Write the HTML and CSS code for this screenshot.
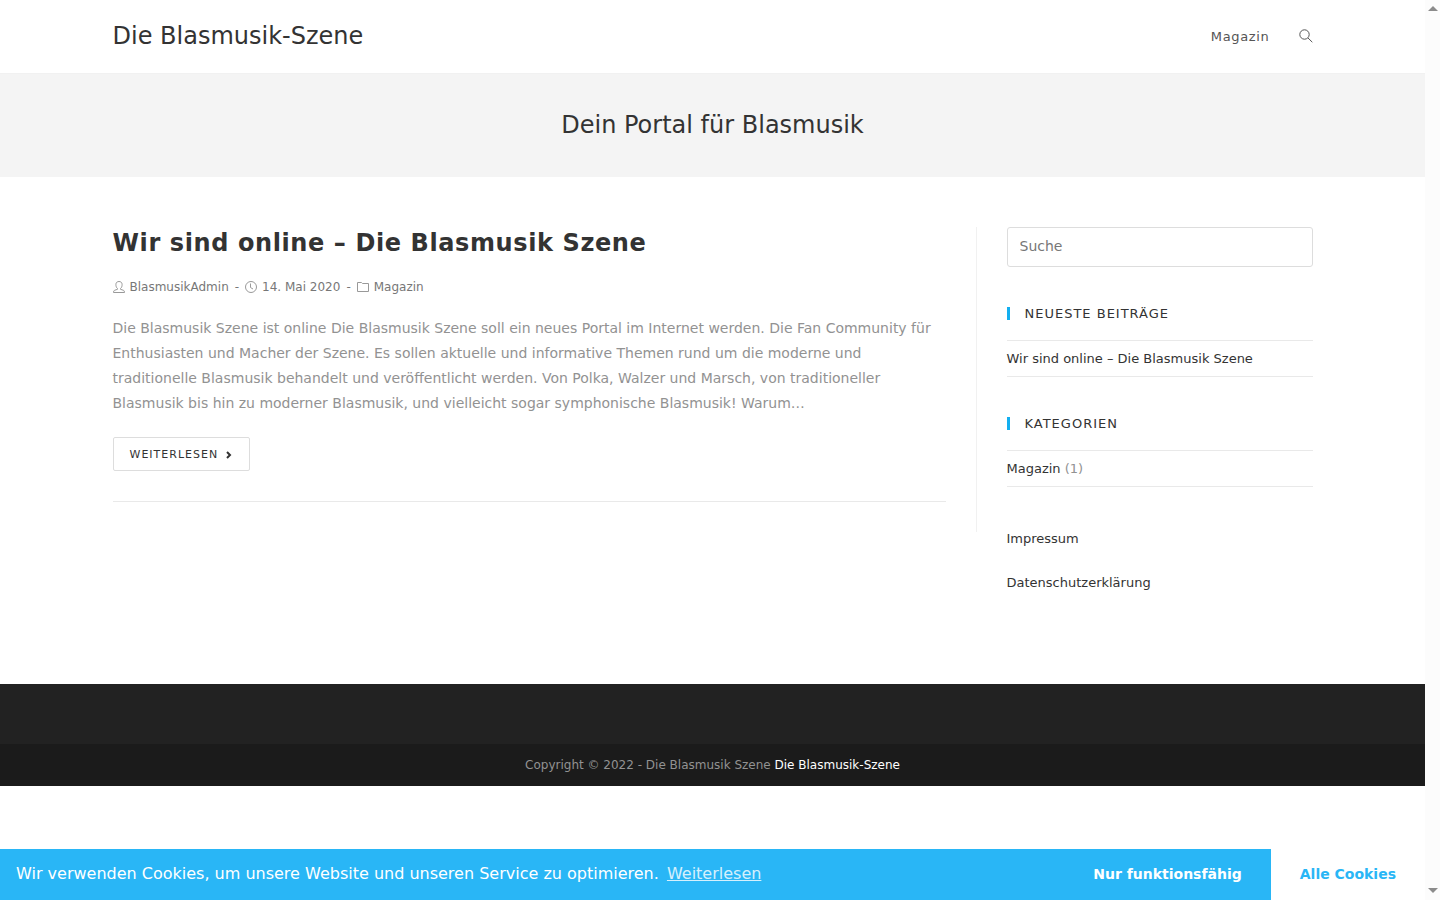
FILE: index.html
```html
<!DOCTYPE html>
<html lang="de">
<head>
    <meta charset="UTF-8">
    <meta name="viewport" content="width=device-width, initial-scale=1.0">
    <title>Die Blasmusik-Szene</title>
    <link rel="stylesheet" href="styles.css">
</head>
<body>

<header class="site-header">
    <div class="container header-inner">
        <a class="site-title" href="#">Die Blasmusik-Szene</a>
        <nav class="main-nav">
            <a href="#">Magazin</a>
            <a href="#" aria-label="Suche">
                <svg class="search-icon" viewBox="0 0 14 14"><circle cx="5.5" cy="5.5" r="4.7"/><path d="M9 9l4.3 4.2"/></svg>
            </a>
        </nav>
    </div>
</header>

<div class="page-header">
    <h1>Dein Portal für Blasmusik</h1>
</div>

<div class="container content">
    <main>
        <article class="entry">
            <h2><a href="#">Wir sind online – Die Blasmusik Szene</a></h2>
            <ul class="meta">
                <li>
                    <svg viewBox="0 0 12 12"><path d="M4.500 7.500C3.300 6.700 2.900 5 2.900 3.500 2.900 1.500 4.200.5 6 .5s3.100 1 3.100 3c0 1.500-.4 3.200-1.600 4v.8l3 1c.7.3 1 1 1 2.200H.5c0-1.200.3-1.900 1-2.200l3-1z"/></svg>
                    <a href="#">BlasmusikAdmin</a>
                </li>
                <li>
                    <svg viewBox="0 0 12 12"><circle cx="6" cy="6" r="5.5"/><path d="M5.500 2.500v4l2.500 1.500"/></svg>
                    14. Mai 2020
                </li>
                <li>
                    <svg viewBox="0 0 12 12"><path d="M.5 10.500v-9h4l1 1h6v8z"/></svg>
                    <a href="#">Magazin</a>
                </li>
            </ul>
            <p>Die Blasmusik Szene ist online Die Blasmusik Szene soll ein neues Portal im Internet werden. Die Fan Community für Enthusiasten und Macher der Szene. Es sollen aktuelle und informative Themen rund um die moderne und traditionelle Blasmusik behandelt und veröffentlicht werden. Von Polka, Walzer und Marsch, von traditioneller Blasmusik bis hin zu moderner Blasmusik, und vielleicht sogar symphonische Blasmusik! Warum…</p>
            <a class="readmore" href="#">Weiterlesen
                <svg viewBox="0 0 8 8"><path d="M2 1l3 3-3 3"/></svg>
            </a>
        </article>
    </main>

    <aside>
        <form class="widget">
            <input type="search" name="s" placeholder="Suche" aria-label="Suche">
        </form>
        <section class="widget">
            <h3>Neueste Beiträge</h3>
            <ul>
                <li><a href="#">Wir sind online – Die Blasmusik Szene</a></li>
            </ul>
        </section>
        <section class="widget">
            <h3>Kategorien</h3>
            <ul>
                <li><a href="#">Magazin</a> (1)</li>
            </ul>
        </section>
        <section class="widget legal">
            <p><a href="#">Impressum</a></p>
            <p><a href="#">Datenschutzerklärung</a></p>
        </section>
    </aside>
</div>

<footer>
    <div class="footer-widgets"></div>
    <div class="footer-bottom">Copyright © 2022 - Die Blasmusik Szene <a href="#">Die Blasmusik-Szene</a></div>
</footer>

<div class="cookie-bar">
    <span class="cookie-text">Wir verwenden Cookies, um unsere Website und unseren Service zu optimieren. <a href="#">Weiterlesen</a></span>
    <button type="button">Nur funktionsfähig</button>
    <button type="button" class="accept">Alle Cookies</button>
</div>

<div class="scrollbar" aria-hidden="true">
    <svg viewBox="0 0 10 5"><path d="M0 5l5-5 5 5z"/></svg>
    <svg viewBox="0 0 10 5"><path d="M0 0l5 5 5-5z"/></svg>
</div>

</body>
</html>
```
FILE: styles.css
```css
* {
    box-sizing: border-box;
}
body {
    margin: 0;
    padding-right: 15px;
    font-family: "DejaVu Sans", sans-serif;
    font-size: 14px;
    color: #929292;
    background-color: #fff;
}
a {
    color: #333;
    text-decoration: none;
}
h1, h2, h3, p, ul {
    margin: 0;
    padding: 0;
    font-weight: normal;
}
ul {
    list-style: none;
}
svg {
    fill: none;
    stroke: currentColor;
}
.container {
    width: 1200px;
    max-width: 90%;
    margin: 0 auto;
}

/* header */
.site-header {
    border-bottom: 1px solid #f1f1f1;
}
.header-inner {
    display: flex;
    justify-content: space-between;
    align-items: center;
    padding: 20px 0 21px;
}
.site-title {
    font-size: 24px;
    line-height: 32px;
}
.main-nav {
    display: flex;
    align-items: center;
    gap: 29px;
    font-size: 13px;
    letter-spacing: 0.05em;
}
.main-nav a {
    color: #555;
}
.search-icon {
    display: block;
    width: 14px;
    height: 14px;
}
.page-header {
    padding: 34px 0 35px;
    background-color: #f4f4f4;
    text-align: center;
}
.page-header h1 {
    font-size: 24px;
    line-height: 34px;
    color: #333;
}

/* content */
.content {
    display: flex;
    align-items: flex-start;
    padding: 50px 0 49px;
}
main {
    width: 72%;
    padding: 0 30px 30px 0;
    border-right: 1px solid #f1f1f1;
}
.entry {
    padding-bottom: 30px;
    border-bottom: 1px solid #e9e9e9;
}
.entry h2 {
    font-size: 24px;
    line-height: 32px;
    font-weight: bold;
    letter-spacing: 0.025em;
}
.meta {
    display: flex;
    margin: 19px 0 20px;
    font-size: 12px;
    line-height: 18px;
    color: #777;
}
.meta li {
    display: flex;
    align-items: center;
}
.meta li + li::before {
    content: "-";
    margin: 0 6px;
}
.meta a {
    color: #777;
}
.meta svg {
    width: 12px;
    height: 12px;
    margin-right: 5px;
    stroke: #999;
}
.entry p {
    line-height: 25px;
}
.readmore {
    display: inline-flex;
    align-items: center;
    margin-top: 21px;
    padding: 1px 16px 0;
    border: 1px solid #ddd;
    border-radius: 2px;
    font-size: 11px;
    line-height: 31px;
    letter-spacing: 1px;
    text-transform: uppercase;
}
.readmore svg {
    width: 8px;
    height: 8px;
    margin-left: 7px;
    stroke-width: 2;
}

/* sidebar */
aside {
    width: 28%;
    padding-left: 30px;
    font-size: 13px;
}
.widget {
    margin-bottom: 40px;
}
.widget input {
    display: block;
    width: 100%;
    height: 40px;
    padding: 0 12px 2px;
    border: 1px solid #ddd;
    border-radius: 3px;
    font-family: inherit;
    font-size: 14px;
    color: #333;
    appearance: none;
}
.widget input::placeholder {
    color: #777;
}
.widget h3 {
    margin-bottom: 20px;
    padding-left: 15px;
    border-left: 3px solid #13aff0;
    font-size: 13px;
    line-height: 13px;
    letter-spacing: 1px;
    text-transform: uppercase;
    color: #333;
}
.widget li {
    border-bottom: 1px solid #e9e9e9;
    line-height: 35px;
}
.widget ul {
    border-top: 1px solid #e9e9e9;
}
.legal p {
    line-height: 24px;
}
.legal p + p {
    margin-top: 20px;
}

/* footer */
.footer-widgets {
    height: 60px;
    background-color: #222;
}
.footer-bottom {
    padding: 12px 0;
    background-color: #1b1b1b;
    font-size: 12px;
    line-height: 18px;
    text-align: center;
}
.footer-bottom a {
    color: #fff;
}

/* cookie notice */
.cookie-bar {
    position: fixed;
    left: 0;
    right: 15px;
    bottom: 0;
    display: flex;
    align-items: stretch;
    background-color: #29b6f6;
    color: #fff;
    font-size: 16px;
    line-height: 49px;
}
.cookie-text {
    flex: 1;
    padding: 0 0 2px 16px;
}
.cookie-text a {
    margin-left: 3px;
    color: #fff;
    opacity: 0.8;
    text-decoration: underline;
}
.cookie-bar button {
    padding: 0 29px 2px;
    border: none;
    background: none;
    color: #fff;
    font-family: inherit;
    font-size: 14px;
    font-weight: bold;
    cursor: pointer;
}
.cookie-bar .accept {
    background-color: #fff;
    color: #29b6f6;
}

.scrollbar {
    position: fixed;
    top: 0;
    right: 0;
    bottom: 0;
    width: 15px;
    padding: 6px 0 7px;
    display: flex;
    flex-direction: column;
    justify-content: space-between;
    align-items: center;
    background-color: #fcfcfc;
}
.scrollbar svg {
    width: 10px;
    height: 5px;
    fill: #8b8b8b;
    stroke: none;
}
```
